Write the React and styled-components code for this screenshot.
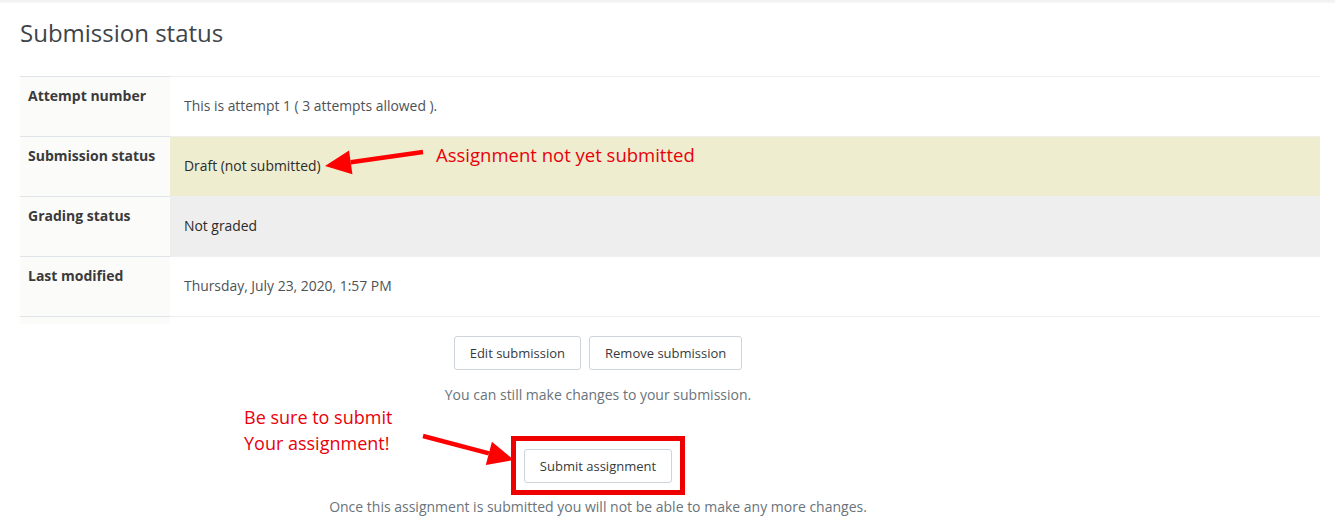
import React from 'react';
import styled, { createGlobalStyle } from 'styled-components';

const GlobalStyle = createGlobalStyle`
  body {
    margin: 0;
    background: #fff;
    font-family: "Open Sans", "Liberation Sans", sans-serif;
    color: #373a3c;
  }
`;

const TopShadow = styled.div`
  height: 2px;
  background: #f2f2f2;
  box-shadow: 0 1px 2px rgba(0, 0, 0, 0.04);
`;

const Page = styled.div`
  position: relative;
  padding: 0 15px 0 20px;
`;

const Title = styled.h2`
  margin: 0;
  padding-top: 16px;
  font-size: 24px;
  font-weight: 400;
  line-height: 30px;
  color: #3d4449;
`;

const Table = styled.div`
  margin-top: 28px;
  display: grid;
  grid-template-columns: 150px 1fr;
`;

const HeadCell = styled.div`
  height: 60px;
  box-sizing: border-box;
  padding: 9px 8px 0;
  border-top: 1px solid #dfe4e8;
  background: #fbfbfa;
  font-size: 14px;
  font-weight: 700;
  color: #3a3a3a;
`;

const ValueCell = styled.div`
  height: 60px;
  box-sizing: border-box;
  display: flex;
  align-items: center;
  padding: 0 14px 3px;
  border-top: 1px solid #efefef;
  background: ${(p) => p.$bg || '#fff'};
  font-size: 13.9px;
  color: ${(p) => p.$dark ? '#2b2b2b' : '#4d5257'};
`;

const TailHead = styled.div`
  height: 7px;
  border-top: 1px solid #dfe4e8;
  background: #fbfbfa;
`;

const TailValue = styled.div`
  border-top: 1px solid #efefef;
`;

const Actions = styled.div`
  width: 1156px;
  display: flex;
  flex-direction: column;
  align-items: center;
`;

const ButtonRow = styled.div`
  display: flex;
  gap: 8px;
  margin-top: 12px;
`;

const Button = styled.button`
  height: 34px;
  padding: 0 15px;
  background: #fff;
  border: 1px solid #ced4da;
  border-radius: 3px;
  font-family: "Open Sans", "Liberation Sans", sans-serif;
  font-size: 13px;
  color: #373a3c;
`;

const Note = styled.p`
  margin: ${(p) => p.$top || 0}px 0 0;
  font-size: 14px;
  line-height: 20px;
  color: #6a737b;
`;

const Highlight = styled.div`
  margin-top: 31px;
  border: 5px solid #ee0000;
  padding: 8px 8px 7px;
`;

const Callout = styled.div`
  position: absolute;
  left: ${(p) => p.$x}px;
  top: ${(p) => p.$y}px;
  font-family: "Open Sans", "Lato", sans-serif;
  font-size: ${(p) => p.$size || 18}px;
  line-height: 26px;
  color: #e8000b;
  white-space: nowrap;
`;

const Arrow = ({ x1, y1, x2, y2 }) => {
  const ang = Math.atan2(y2 - y1, x2 - x1);
  const len = 26;
  const w = 12;
  const bx = x2 - len * Math.cos(ang);
  const by = y2 - len * Math.sin(ang);
  const px = -Math.sin(ang) * w;
  const py = Math.cos(ang) * w;
  return (
    <g>
      <line x1={x1} y1={y1} x2={bx} y2={by} stroke="#f00" strokeWidth="4.5" />
      <polygon points={`${x2},${y2} ${bx + px},${by + py} ${bx - px},${by - py}`} fill="#f00" />
    </g>
  );
};

const Overlay = styled.svg`
  position: absolute;
  left: 0;
  top: -2px;
  pointer-events: none;
`;

const rows = [
  { label: 'Attempt number', value: 'This is attempt 1 ( 3 attempts allowed ).' },
  { label: 'Submission status', value: 'Draft (not submitted)', bg: '#eeedd0', dark: true },
  { label: 'Grading status', value: 'Not graded', bg: '#eeeeee', dark: true },
  { label: 'Last modified', value: 'Thursday, July 23, 2020, 1:57 PM' },
];

export default function App() {
  return (
    <>
      <GlobalStyle />
      <TopShadow />
      <Page>
        <Title>Submission status</Title>
        <Table>
          {rows.map((r) => (
            <React.Fragment key={r.label}>
              <HeadCell>{r.label}</HeadCell>
              <ValueCell $bg={r.bg} $dark={r.dark}>{r.value}</ValueCell>
            </React.Fragment>
          ))}
          <TailHead />
          <TailValue />
        </Table>
        <Actions>
          <ButtonRow>
            <Button>Edit submission</Button>
            <Button>Remove submission</Button>
          </ButtonRow>
          <Note $top={15}>You can still make changes to your submission.</Note>
          <Highlight>
            <Button>Submit assignment</Button>
          </Highlight>
          <Note $top={2}>Once this assignment is submitted you will not be able to make any more changes.</Note>
        </Actions>

        <Callout $x={436} $y={140} $size={18.5}>Assignment not yet submitted</Callout>
        <Callout $x={244} $y={402}>Be sure to submit<br />Your assignment!</Callout>
        <Overlay width="1335" height="528" viewBox="0 0 1335 528">
          <Arrow x1={423} y1={152} x2={325} y2={166} />
          <Arrow x1={423} y1={436} x2={514} y2={460} />
        </Overlay>
      </Page>
    </>
  );
}
